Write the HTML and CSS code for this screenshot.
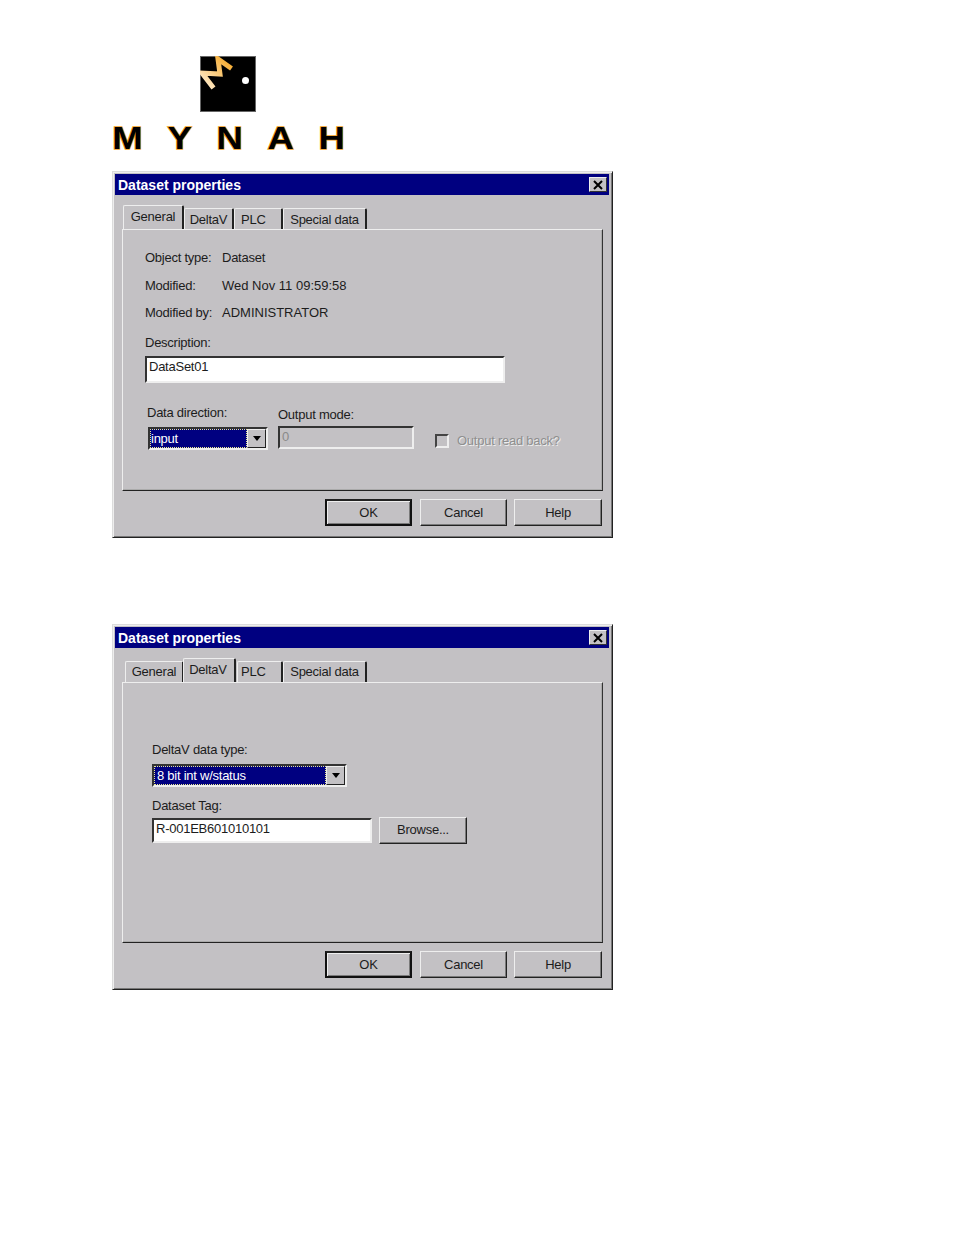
FILE: index.html
```html
<!DOCTYPE html>
<html lang="en">

<head>
  <meta charset="UTF-8">
  <title>Dataset properties</title>
  <link rel="stylesheet" href="styles.css">
</head>

<body>
  <!-- logo -->
  <div class="logo">
    <svg class="logo-mark" width="56" height="56" viewBox="0 0 56 56">
      <defs>
        <linearGradient id="bird" x1="1" y1="0" x2="0" y2="1">
          <stop offset="0" stop-color="#f5a623" />
          <stop offset="1" stop-color="#fff0d8" />
        </linearGradient>
      </defs>
      <rect x=".5" y=".5" width="55" height="55" fill="#000" stroke="#666" />
      <path d="M31.5 12.5 18 3 20 18 2 17 13.5 32" fill="none" stroke="url(#bird)" stroke-width="5" />
      <circle cx="45.5" cy="24.5" r="3.5" fill="#fff" />
    </svg>
    <div class="logo-word">
      <span>M</span><span>Y</span><span>N</span><span>A</span><span>H</span>
    </div>
  </div>

  <!-- first dialog -->
  <div class="dialog dialog-general">
    <div class="title-bar">
      <span class="title-text">Dataset properties</span>
      <span class="close">
        <svg width="14" height="12" viewBox="0 0 14 12">
          <path d="M3 2 11 10M11 2 3 10" stroke="#000" stroke-width="2" fill="none" />
        </svg>
      </span>
    </div>
    <div class="tabs">
      <div class="tab active tab-general">General</div>
      <div class="tab tab-delta">DeltaV</div>
      <div class="tab tab-plc">PLC</div>
      <div class="tab tab-special">Special data</div>
    </div>
    <div class="panel">
      <div class="info-row">
        <span>Object type:</span><span>Dataset</span>
      </div>
      <div class="info-row">
        <span>Modified:</span><span class="info-wide">Wed Nov 11 09:59:58</span>
      </div>
      <div class="info-row">
        <span>Modified by:</span><span class="info-wide">ADMINISTRATOR</span>
      </div>
      <div class="desc-label">Description:</div>
      <div class="field desc-field">DataSet01</div>
      <div class="form-row">
        <div class="col-direction">
          <div class="label">Data direction:</div>
          <div class="select select-direction">
            <div class="select-value">input</div>
            <div class="select-arrow"></div>
          </div>
        </div>
        <div class="col-output">
          <div class="label">Output mode:</div>
          <div class="field field-disabled">0</div>
        </div>
        <div class="col-check">
          <span class="check"></span>
          <span class="check-label">Output read back?</span>
        </div>
      </div>
    </div>
    <div class="buttons">
      <div class="btn btn-default">OK</div>
      <div class="btn">Cancel</div>
      <div class="btn btn-help">Help</div>
    </div>
  </div>

  <!-- second dialog -->
  <div class="dialog dialog-delta">
    <div class="title-bar">
      <span class="title-text">Dataset properties</span>
      <span class="close">
        <svg width="14" height="12" viewBox="0 0 14 12">
          <path d="M3 2 11 10M11 2 3 10" stroke="#000" stroke-width="2" fill="none" />
        </svg>
      </span>
    </div>
    <div class="tabs">
      <div class="tab tab-general2">General</div>
      <div class="tab active tab-delta2">DeltaV</div>
      <div class="tab tab-plc2">PLC</div>
      <div class="tab tab-special">Special data</div>
    </div>
    <div class="panel panel-delta">
      <div class="label">DeltaV data type:</div>
      <div class="select select-type">
        <div class="select-value">8 bit int w/status</div>
        <div class="select-arrow"></div>
      </div>
      <div class="label label-tag">Dataset Tag:</div>
      <div class="tag-row">
        <div class="field tag-field">R-001EB601010101</div>
        <div class="btn btn-browse">Browse...</div>
      </div>
    </div>
    <div class="buttons">
      <div class="btn btn-default">OK</div>
      <div class="btn">Cancel</div>
      <div class="btn btn-help">Help</div>
    </div>
  </div>
</body>

</html>
```

FILE: styles.css
```css
body {
  margin: 0;
  padding: 56px 0 0 112px;
  background: #fff;
  font-family: "Liberation Sans", Arial, sans-serif;
  font-size: 13px;
  letter-spacing: -.25px;
  color: #1c1c1c;
}

.logo {
  width: 234px;
  height: 115px;
}

.logo-mark {
  display: block;
  margin-left: 88px;
}

.logo-word {
  display: flex;
  justify-content: space-between;
  margin-top: 8px;
  padding: 0 3px 0 2px;
  font-size: 32px;
  line-height: 36px;
  font-weight: bold;
  letter-spacing: 0;
  color: #000;
  -webkit-text-stroke: 1.5px #f0a020;
  paint-order: stroke fill;
}

.logo-word span {
  display: block;
  transform: scaleX(1.14);
}

.dialog {
  width: 501px;
  box-sizing: border-box;
  background: #c3c1c4;
  border: 1px solid;
  border-color: #dcdcdc #222 #222 #dcdcdc;
  padding: 2px 3px 0 2px;
  box-shadow: inset 1px 1px 0 #eee, inset -1px -1px 0 #777;
}

.dialog-general {
  height: 367px;
}

.dialog-delta {
  height: 366px;
  margin-top: 86px;
}

.title-bar {
  height: 21px;
  background: #000080;
  color: #fff;
  font-weight: bold;
  font-size: 14px;
  letter-spacing: 0;
  padding: 0 2px 0 3px;
  display: flex;
  justify-content: space-between;
  align-items: center;
}

.title-text {
  padding-top: 1px;
}

.close {
  width: 18px;
  height: 15px;
  background: #c3c1c4;
  border: 1px solid;
  border-color: #eee #333 #333 #eee;
  box-sizing: border-box;
  display: flex;
  align-items: center;
  justify-content: center;
}

.tabs {
  height: 34px;
  display: flex;
  align-items: flex-end;
  padding-left: 8px;
}

.tab {
  height: 21px;
  line-height: 21px;
  box-sizing: border-box;
  text-align: center;
  border-top: 1px solid #eee;
  border-left: 1px solid #eee;
  border-right: 2px solid #222;
  border-radius: 2px 2px 0 0;
}

.dialog-delta .tab {
  line-height: 19px;
}

.tab.active,
.dialog-delta .tab.active {
  height: 24px;
  line-height: 21px;
}

.tab-general {
  width: 61px;
}

.tab-delta {
  width: 50px;
}

.tab-plc {
  width: 49px;
  text-align: left;
  padding-left: 6px;
}

.tab-general2 {
  width: 59px;
  margin-left: 2px;
}

.tab-delta2 {
  width: 53px;
  margin-left: -1px;
  padding-right: 2px;
}

.tab-plc2 {
  width: 46px;
  margin-left: 1px;
  text-align: left;
  padding-left: 3px;
}

.tab-special {
  width: 84px;
}

.panel {
  width: 481px;
  height: 262px;
  margin-left: 7px;
  box-sizing: border-box;
  border: 1px solid;
  border-color: #eee #333 #222 #eee;
  box-shadow: -1px -1px 0 #aaa inset;
  padding: 18px 22px 0;
}

.info-row {
  display: flex;
  height: 27.5px;
  line-height: 20px;
}

.info-row span:first-child {
  width: 77px;
}

.info-wide {
  letter-spacing: 0;
}

.desc-label {
  margin-top: 2px;
  line-height: 20px;
}

.field {
  box-sizing: border-box;
  background: #fff;
  border: 2px solid;
  border-color: #333 #eee #eee #333;
  line-height: 18px;
  padding-left: 2px;
}

.desc-field {
  width: 360px;
  height: 27px;
  margin-top: 3px;
}

.form-row {
  display: flex;
  margin-top: 20px;
}

.label {
  line-height: 20px;
}

.col-direction {
  width: 131px;
  margin-left: 2px;
}

.select {
  box-sizing: border-box;
  display: flex;
  background: #fff;
  border: 2px solid;
  border-color: #333 #eee #eee #333;
}

.select-direction {
  width: 120px;
  height: 23px;
  margin: 4px 0 0 1px;
}

.select-value {
  flex: 1;
  background: #000080;
  color: #fff;
  line-height: 18px;
  padding-left: 2px;
  border: 1px dotted #e8e890;
}

.select-direction .select-value {
  padding-left: 0;
}

.select-arrow {
  width: 19px;
  background: #c3c1c4;
  border: 1px solid;
  border-color: #eee #222 #222 #eee;
  box-sizing: border-box;
  display: flex;
  align-items: center;
  justify-content: center;
}

.select-arrow::after {
  content: "";
  border-top: 5px solid #000;
  border-left: 4px solid transparent;
  border-right: 4px solid transparent;
}

.col-output {
  width: 157px;
  padding-top: 2px;
}

.field-disabled {
  width: 136px;
  height: 23px;
  margin-top: 1px;
  background: #c3c1c4;
  color: #8a8a8a;
}

.col-check {
  display: flex;
  align-items: center;
  height: 20px;
  margin-top: 28px;
}

.check {
  width: 14px;
  height: 14px;
  box-sizing: border-box;
  border: 2px solid;
  border-color: #444 #eee #eee #444;
  margin-right: 8px;
}

.check-label {
  color: #8f8f8f;
  text-shadow: 1px 1px 0 #eee;
}

.buttons {
  display: flex;
  justify-content: flex-end;
  gap: 7px;
  margin: 8px 7px 0 0;
}

.btn {
  width: 87px;
  height: 27px;
  box-sizing: border-box;
  text-align: center;
  line-height: 25px;
  border: 1px solid;
  border-color: #eee #222 #222 #eee;
  box-shadow: inset -1px -1px 0 #7a7a7a;
}

.btn-help {
  width: 88px;
}

.btn-default {
  margin-right: 1px;
  border: 2px solid #111;
  border-top-color: #222;
  line-height: 23px;
  box-shadow: inset 1px 1px 0 #eee, inset -1px -1px 0 #7a7a7a;
}

.panel-delta {
  height: 261px;
  padding: 57px 29px 0;
}

.select-type {
  width: 195px;
  height: 23px;
  margin-top: 4px;
}

.label-tag {
  margin-top: 9px;
}

.tag-row {
  display: flex;
  align-items: center;
  margin-top: 1px;
  gap: 7px;
}

.tag-field {
  width: 220px;
  height: 25px;
}

.btn-browse {
  width: 88px;
  line-height: 23px;
}
```
